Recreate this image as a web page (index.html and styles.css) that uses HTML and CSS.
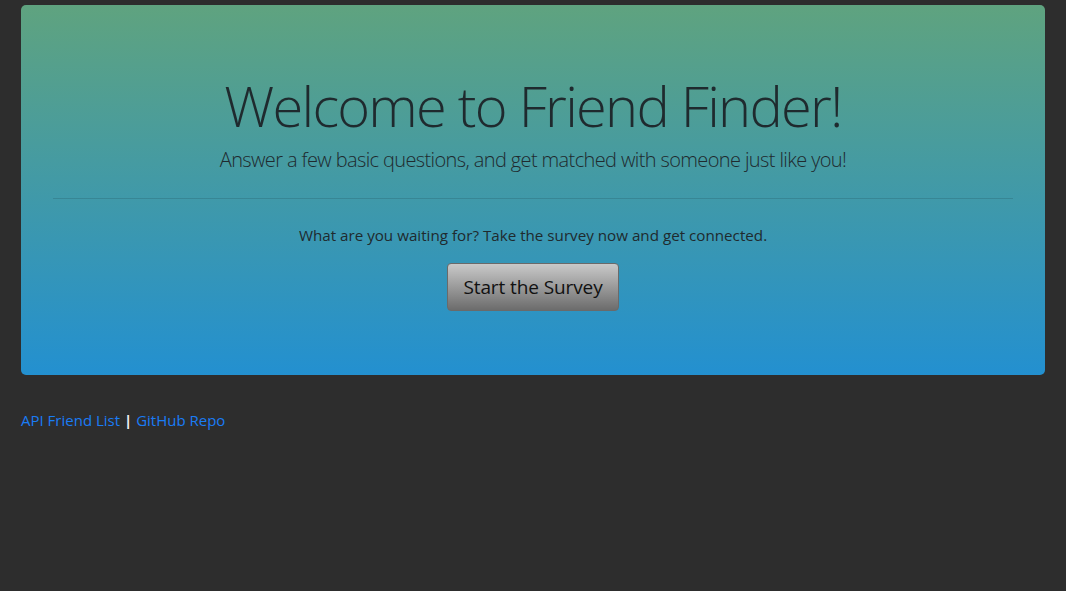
FILE: index.html
```html
<!DOCTYPE html>
<html lang="en">
<head>
<meta charset="utf-8">
<title>Friend Finder</title>
<link rel="stylesheet" href="styles.css">
</head>
<body>
<div class="page">
  <section class="jumbotron">
    <h1 class="title">Welcome to Friend Finder!</h1>
    <p class="lead">Answer a few basic questions, and get matched with someone just like you!</p>
    <hr class="divider">
    <p class="cta-text">What are you waiting for? Take the survey now and get connected.</p>
    <div class="cta-row"><a class="btn" href="#">Start the Survey</a></div>
  </section>
  <footer class="links">
    <a href="#">API Friend List</a> <span class="sep">|</span> <a href="#">GitHub Repo</a>
  </footer>
</div>
</body>
</html>
```

FILE: styles.css
```css
* { box-sizing: border-box; }
html, body { margin: 0; padding: 0; }
body {
  background: #2d2d2d;
  font-family: "Open Sans", "Noto Sans", sans-serif;
  color: #212529;
  font-size: 16px;
  line-height: 1.5;
}
.page {
  padding: 5px 21px 0 21px;
}
.jumbotron {
  background: linear-gradient(to bottom, #5fa37f 0%, #2390d0 100%);
  border-radius: 5px;
  padding: 67px 32px 64px 32px;
  margin-bottom: 32px;
  text-align: center;
}
.title {
  font-size: 56px;
  font-weight: 300;
  line-height: 1.2;
  margin: 0 0 6px 0;
  color: #1f2a2e;
  letter-spacing: -1.75px;
}
.lead {
  font-size: 20px;
  font-weight: 300;
  line-height: 30px;
  margin: 0;
  color: #1f2a2e;
  letter-spacing: -0.62px;
}
.divider {
  border: 0;
  border-top: 1px solid rgba(0,0,0,0.12);
  margin: 23px 0 24px 0;
}
.cta-text {
  margin: 0 0 16px 0;
  font-size: 15.2px;
  line-height: 24px;
  color: #1f2a2e;
}
.cta-row {
  display: flex;
  justify-content: center;
}
.btn {
  display: inline-block;
  padding: 8px 15px;
  font-size: 19px;
  line-height: 30px;
  color: #111;
  text-decoration: none;
  border: 1px solid #6a6a6a;
  border-radius: 4px;
  background: linear-gradient(to bottom, #c9c9c9 0%, #6c6c6c 100%);
  letter-spacing: -0.1px;
}
.links {
  font-size: 15px;
  line-height: 24px;
  color: #fff;
  padding-top: 1px;
}
.links a {
  color: #1a7cf5;
  text-decoration: none;
}
.sep { color: #f4f4f4; font-weight: 700; }
```
